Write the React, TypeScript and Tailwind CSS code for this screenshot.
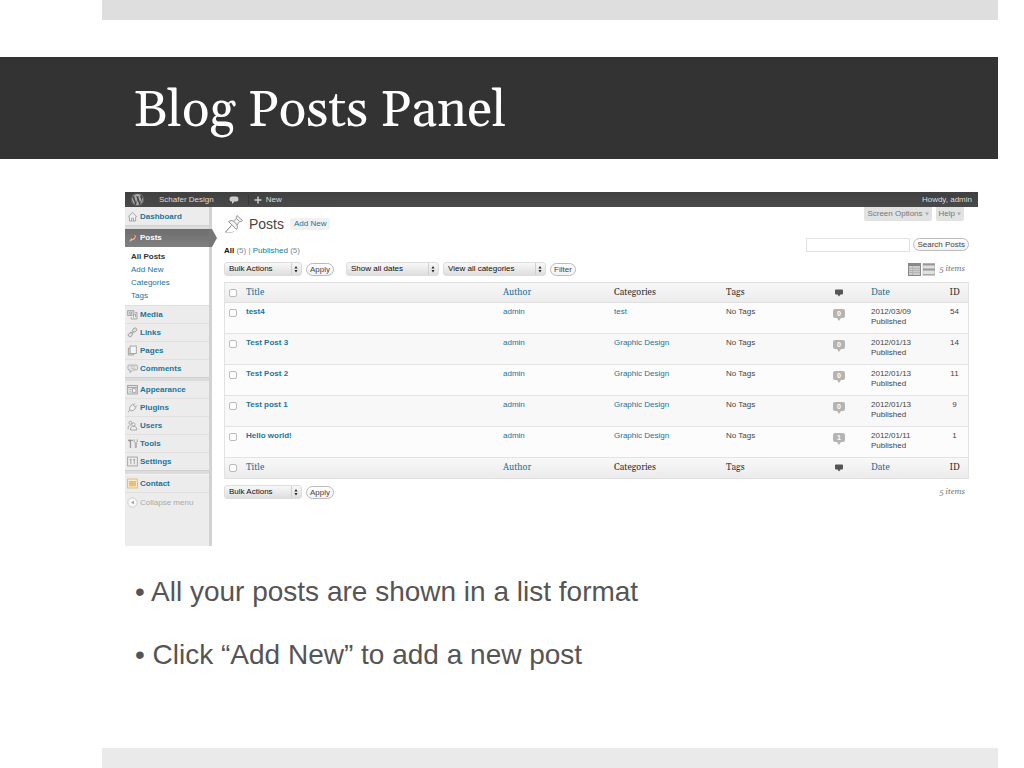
import React from "react";
import { FaWordpress } from "react-icons/fa";

const LINK = "text-[#21759b]";

type IconName =
  | "home" | "media" | "links" | "pages" | "comments" | "appearance"
  | "plugins" | "users" | "tools" | "settings" | "contact" | "collapse";

const iconShapes: Record<IconName, React.ReactNode> = {
  home: (
    <>
      <path d="M1.5 8.5 8 2l6.500 6.500" />
      <path d="M3.500 8v6.500h9V8" fill="#f4f4f4" />
      <path d="M6.500 14.500v-4h3v4" />
    </>
  ),
  media: (
    <>
      <rect x="1" y="2.500" width="9" height="7" fill="#ddd" />
      <circle cx="5.500" cy="6" r="1.700" />
      <path d="M12 5h2.500v9.500H6V12" fill="#eee" />
      <path d="M9.500 12.500V8l3-.7v4.500" />
    </>
  ),
  links: (
    <>
      <rect x="7.500" y="2" width="7" height="5" rx="2.500" transform="rotate(-40 11 4.500)" fill="#ddd" />
      <rect x="1.500" y="8.500" width="7" height="5" rx="2.500" transform="rotate(-40 5 11)" fill="#ddd" />
      <path d="m6 9.500 4-3.500" />
    </>
  ),
  pages: (
    <>
      <path d="M4 4.500H2v10h8V13" fill="#ddd" />
      <rect x="4.500" y="1.500" width="9" height="11" fill="#f6f6f6" />
    </>
  ),
  comments: (
    <>
      <path d="M3 3h10.500c1 0 1.500.7 1.500 1.500v4c0 1-.6 1.500-1.500 1.500H8l-3.500 4V10H3c-1 0-1.500-.6-1.500-1.500v-4C1.500 3.600 2 3 3 3Z" fill="#f4f4f4" />
      <path d="M4 5.500h8.500M4 7.700h8.500" strokeWidth=".8" />
    </>
  ),
  appearance: (
    <>
      <rect x="1" y="2" width="14" height="12.500" fill="#e4e4e4" />
      <path d="M1 5h14M4 8h2M4 11.500h2" />
      <rect x="8" y="7" width="5" height="5" fill="#fff" />
    </>
  ),
  plugins: (
    <path d="M1.500 14.500 4 12c-1.200-3 0-6 4-8.500l5 4.500c-2 4-5 5.500-8.500 4.500M9 4.500 11.500 2M12 7.500 14.500 5" fill="#eee" />
  ),
  users: (
    <>
      <circle cx="5" cy="4" r="2.200" fill="#eee" />
      <path d="M1.500 13.500C1.500 9 3 7.500 5 7.500" />
      <circle cx="9.500" cy="6.500" r="2.300" fill="#f6f6f6" />
      <path d="M5 14.500c0-4 1.500-5.200 4.500-5.200s4.800 1.200 4.800 5.200Z" fill="#f0f0f0" />
    </>
  ),
  tools: (
    <>
      <path d="M1.500 3.500h7M5 3.500v11M3.500 2v3" strokeWidth="2" />
      <path d="M10.500 2v3.500l1.500 1V14h1.500V6.500l1.500-1V2" />
    </>
  ),
  settings: (
    <>
      <rect x="1" y="1.500" width="14" height="13" fill="#eee" />
      <path d="M5.500 4v8M10.500 4v8M4 5.500h3M9 5.500h3" />
    </>
  ),
  contact: (
    <g stroke="#dcb062">
      <rect x="1" y="1.500" width="14" height="13" fill="#fbeed2" />
      <rect x="4" y="5" width="8" height="6.500" fill="#f3cf8c" />
      <path d="M4 8.500h8M7 5v3.500" />
    </g>
  ),
  collapse: (
    <>
      <circle cx="8" cy="8" r="6.800" fill="#f7f7f7" stroke="#c8c8c8" />
      <path d="M10 5.500v5L6 8Z" fill="#999" stroke="none" />
    </>
  ),
};

function MenuIcon({ name }: { name: IconName }) {
  return (
    <svg viewBox="0 0 16 16" className="size-[11px] shrink-0" fill="none" stroke="#999" strokeWidth="1.200" aria-hidden="true">
      {iconShapes[name]}
    </svg>
  );
}

function MenuItem({ icon, label }: { icon: IconName; label: string }) {
  return (
    <li className="border-b border-[#e0e0e0] last:border-b-0">
      <a href="#" className={`flex h-[17px] items-center gap-[2px] pl-[2px] font-bold ${LINK}`}>
        <MenuIcon name={icon} />
        {label}
      </a>
    </li>
  );
}

const Separator = () => <div className="h-1 border-t border-[#d0d0d0] bg-[#dcdcdc]" />;

const submenu = ["Add New", "Categories", "Tags"];
const contentMenu: [IconName, string][] = [["media", "Media"], ["links", "Links"], ["pages", "Pages"], ["comments", "Comments"]];
const siteMenu: [IconName, string][] = [
  ["appearance", "Appearance"], ["plugins", "Plugins"], ["users", "Users"], ["tools", "Tools"], ["settings", "Settings"],
];

function Sidebar() {
  return (
    <nav className="w-[87px] shrink-0 border-r-[3px] border-[#d2d2d2] bg-[#ececec] pb-[34px]">
      <ul className="pt-px"><MenuItem icon="home" label="Dashboard" /></ul>
      <Separator />
      <div className="relative">
        <a href="#" className="flex h-[18px] items-center gap-[2px] bg-linear-to-b from-[#6d6d6d] to-[#808080] pl-[2px] font-bold text-white">
          <svg viewBox="0 0 16 16" className="size-[11px]" aria-hidden="true">
            <path d="m3 13 3-5 3-4 3-1 1 2-2 4-4 2Z" fill="#d8c8c0" />
            <path d="m6 7 4-4 2 2-4 4Z" fill="#b5533c" />
          </svg>
          Posts
        </a>
        <svg viewBox="0 0 8 18" className="absolute top-0 -right-2 h-[18px] w-2" aria-hidden="true">
          <path d="M0 0h3l5 9-5 9H0Z" fill="#777" />
        </svg>
      </div>
      <ul className="bg-white pt-[3px] pb-[3px] leading-[13px]">
        <li className="pl-1.5"><a href="#" className="font-bold text-[#333]">All Posts</a></li>
        {submenu.map((s) => (
          <li key={s} className="pl-1.5"><a href="#" className={LINK}>{s}</a></li>
        ))}
      </ul>
      <ul className="border-t border-[#dfdfdf]">
        {contentMenu.map(([i, l]) => <MenuItem key={l} icon={i} label={l} />)}
      </ul>
      <Separator />
      <ul>
        {siteMenu.map(([i, l]) => <MenuItem key={l} icon={i} label={l} />)}
      </ul>
      <Separator />
      <ul className="border-t border-[#f4f4f4]"><MenuItem icon="contact" label="Contact" /></ul>
      <button type="button" className="flex h-5 w-full items-center gap-[2px] border-t border-[#e0e0e0] pl-[2px] text-[#aaa]">
        <MenuIcon name="collapse" />
        Collapse menu
      </button>
    </nav>
  );
}

function Dropdown({ label, name, className }: { label: string; name: string; className: string }) {
  return (
    <div className={`relative h-3.5 ${className}`}>
      <select
        aria-label={name}
        className="size-full appearance-none rounded-[3px] border border-[#ddd] bg-linear-to-b from-[#f8f8f8] to-[#dedede] pl-1 text-[8px] leading-3 text-[#111]"
      >
        <option>{label}</option>
      </select>
      <svg viewBox="0 0 10 12" className="pointer-events-none absolute top-px right-px h-3 w-2.5" aria-hidden="true">
        <path d="M.5 0v12" stroke="#d0d0d0" />
        <path d="M3.500 5.500 5 3l1.500 2.500ZM3.500 7 5 9.500 6.500 7Z" fill="#222" />
      </svg>
    </div>
  );
}

function PillButton({ children }: { children: React.ReactNode }) {
  return (
    <button type="button" className="h-[13px] rounded-full border border-[#bbb] bg-linear-to-b from-white to-[#f2f2f2] px-[3px] text-[8px] leading-[11px] text-[#444]">
      {children}
    </button>
  );
}

function BulkActions({ name }: { name: string }) {
  return (
    <div className="flex items-center gap-1">
      <Dropdown label="Bulk Actions" name={name} className="w-[78px]" />
      <PillButton>Apply</PillButton>
    </div>
  );
}

const ItemCount = () => (
  <span className="pr-1 font-[Georgia,Gelasio,'Liberation_Serif',serif] text-[8px] text-[#777] italic">5 items</span>
);

function HeadRow({ edge }: { edge: string }) {
  const cell = `h-[21px] text-left font-normal ${edge}`;
  return (
    <tr className="bg-linear-to-b from-[#f8f8f8] to-[#ebebeb] font-[Georgia,Gelasio,'Liberation_Serif',serif] text-[9px] text-[#333]">
      <th className={cell}><Tick label="Select all posts" /></th>
      <th className={cell}><a href="#" className={LINK}>Title</a></th>
      <th className={cell}><a href="#" className={LINK}>Author</a></th>
      <th className={cell}>Categories</th>
      <th className={cell}>Tags</th>
      <th className={cell} aria-label="Comments">
        <svg viewBox="0 0 8 8" className="mx-auto size-2" aria-hidden="true">
          <path d="M1 .5h6q1 0 1 1v3q0 1-1 1H5.500L4 7.500 2.500 5.500H1q-1 0-1-1v-3q0-1 1-1Z" fill="#555" />
        </svg>
      </th>
      <th className={cell}><a href="#" className={LINK}>Date</a></th>
      <th className={`h-[21px] text-center font-normal ${edge}`}>ID</th>
    </tr>
  );
}

function Tick({ label }: { label: string }) {
  return (
    <input
      type="checkbox"
      aria-label={label}
      className="ml-1 block size-[8px] appearance-none rounded-[2px] border border-[#bbb] bg-white"
    />
  );
}

const posts = [
  { title: "test4", category: "test", comments: 0, date: "2012/03/09", id: 54 },
  { title: "Test Post 3", category: "Graphic Design", comments: 0, date: "2012/01/13", id: 14 },
  { title: "Test Post 2", category: "Graphic Design", comments: 0, date: "2012/01/13", id: 11 },
  { title: "Test post 1", category: "Graphic Design", comments: 0, date: "2012/01/13", id: 9 },
  { title: "Hello world!", category: "Graphic Design", comments: 1, date: "2012/01/11", id: 1 },
];

function PostsTable() {
  return (
    <table className="mt-1.5 w-full table-fixed border-separate border-spacing-0 border-x border-[#e3e3e3] leading-[10px]">
      <colgroup>
        <col className="w-[21px]" />
        <col />
        <col className="w-[111px]" />
        <col className="w-[112px]" />
        <col className="w-[81px]" />
        <col className="w-[64px]" />
        <col className="w-[70px]" />
        <col className="w-[27px]" />
      </colgroup>
      <thead><HeadRow edge="border-y border-[#dfdfdf]" /></thead>
      <tbody>
        {posts.map((p) => (
          <tr key={p.title} className="h-[31px] align-top odd:bg-[#fcfcfc] even:bg-[#f8f8f8] [&>td]:border-b [&>td]:border-[#e3e3e3] [&>td]:pt-1">
            <td><div className="pt-[2px]"><Tick label={`Select ${p.title}`} /></div></td>
            <td><a href="#" className={`font-bold ${LINK}`}>{p.title}</a></td>
            <td><a href="#" className={LINK}>admin</a></td>
            <td><a href="#" className={LINK}>{p.category}</a></td>
            <td>No Tags</td>
            <td>
              <a href="#" className="relative mx-auto mt-[2px] block h-3 w-3">
                <svg viewBox="0 0 12 12" className="size-3" aria-hidden="true">
                  <path d="M2 0h8q2 0 2 2v5q0 2-2 2H8l-2 3-2-3H2Q0 9 0 7V2Q0 0 2 0Z" fill="#b4b4b4" />
                </svg>
                <span className="absolute inset-x-0 top-0 text-center text-[7px] leading-[9px] font-bold text-white">{p.comments}</span>
              </a>
            </td>
            <td>{p.date}<br />Published</td>
            <td className="text-center">{p.id}</td>
          </tr>
        ))}
      </tbody>
      <tfoot><HeadRow edge="border-b border-[#dfdfdf]" /></tfoot>
    </table>
  );
}

function ScreenTab({ children }: { children: React.ReactNode }) {
  return (
    <button type="button" className="flex h-3.5 items-center gap-[2px] rounded-b-[2px] bg-[#e2e2e2] px-[3px] text-[8px] text-[#777]">
      {children}
      <svg viewBox="0 0 5 4" className="h-1 w-1" aria-hidden="true"><path d="M0 0h5L2.500 4Z" fill="#aaa" /></svg>
    </button>
  );
}

function AdminPanel() {
  return (
    <section className="mt-[33px] mr-[46px] ml-[125px] font-['Liberation_Sans',Arial,sans-serif] text-[8px] leading-[10px] text-[#444]">
      <header className="flex h-[15px] items-center bg-linear-to-b from-[#404040] to-[#494949] pr-1.5 pl-1.5 text-[#ddd]">
        <FaWordpress className="size-[13px] text-[#aaa]" aria-hidden="true" />
        <a href="#" className="ml-[15px]">Schafer Design</a>
        <a href="#" aria-label="Comments" className="ml-[15px] border-r border-[#383838] pr-[9px]">
          <svg viewBox="0 0 10 10" className="size-[10px]" aria-hidden="true">
            <path d="M2.500 1.500h5Q9.500 1.500 9.500 4T7.500 6.500H5.500L3 9V6.500H2.500Q.5 6.500.5 4t2-2.500Z" fill="#ccc" />
          </svg>
        </a>
        <a href="#" className="ml-[5px] flex items-center gap-1">
          <svg viewBox="0 0 8 8" className="size-2" aria-hidden="true"><path d="M4 .5v7M.5 4h7" stroke="#ccc" strokeWidth="1.500" /></svg>
          New
        </a>
        <a href="#" className="ml-auto">Howdy, admin</a>
      </header>
      <div className="flex">
        <Sidebar />
        <div className="min-w-0 flex-1 pr-[9px] pl-3">
          <div className="flex items-start">
            <div className="flex h-[26px] items-center pt-2">
              <svg viewBox="0 0 20 20" className="size-5" fill="#f2f2f2" stroke="#999" strokeWidth="1" aria-hidden="true">
                <path d="M1 18.500h7l2-1.500" stroke="#ccc" fill="none" />
                <path d="m7.500 11.500-6 6.500" stroke="#777" />
                <path d="M4.500 7.500q2.500-1.700 5-.5l3-2.500q-.8-1.800.5-3L18.500 6.500q-1.200 1.500-3 1l-2.500 3.500q1.200 2.500-.5 4.500Z" />
                <path d="m9.500 7 3.700 4M12.500 4.500l3 3" fill="none" />
              </svg>
              <h2 className="ml-[5px] text-[14px] leading-[18px] text-[#464646]">Posts</h2>
              <a href="#" className={`ml-[6px] rounded-[3px] bg-[#f1f1f1] px-1 py-px ${LINK}`}>Add New</a>
            </div>
            <div className="ml-auto flex gap-1 pr-[5px]">
              <ScreenTab>Screen Options</ScreenTab>
              <ScreenTab>Help</ScreenTab>
            </div>
          </div>
          <div className="flex h-[23px] items-end justify-between">
            <p className="text-[#888]">
              <a href="#" className="font-bold text-[#111]">All</a> (5) | <a href="#" className={LINK}>Published</a> (5)
            </p>
            <form className="flex h-full items-center gap-[3px]" onSubmit={(e) => e.preventDefault()}>
              <input type="text" aria-label="Search posts" className="h-3.5 w-[104px] border border-[#e2e2e2] bg-white px-1 text-[8px]" />
              <PillButton>Search Posts</PillButton>
            </form>
          </div>
          <div className="mt-1.5 flex h-3.5 items-center">
            <BulkActions name="Bulk actions, top" />
            <div className="ml-3 flex items-center gap-1">
              <Dropdown label="Show all dates" name="Dates" className="w-[93px]" />
              <Dropdown label="View all categories" name="Categories" className="w-[103px]" />
              <PillButton>Filter</PillButton>
            </div>
            <div className="ml-auto flex items-center">
              <button type="button" aria-label="List view">
                <svg viewBox="0 0 13 13" className="size-[13px]" aria-hidden="true">
                  <rect x=".5" y=".5" width="12" height="12" fill="#ccc" stroke="#888" />
                  <path d="M1 2h11" stroke="#888" strokeWidth="2" />
                  <path d="M1 5.500h11M1 7.500h11M1 9.500h11M4.500 3v9" stroke="#b4b4b4" />
                </svg>
              </button>
              <button type="button" aria-label="Excerpt view" className="ml-px">
                <svg viewBox="0 0 13 13" className="size-[13px]" aria-hidden="true">
                  <rect x="1" y=".5" width="11.500" height="12" fill="#e0e0e0" stroke="#ccc" />
                  <path d="M1 1.500h12M1 6.500h12" stroke="#999" strokeWidth="2" />
                  <path d="M1 11.500h12" stroke="#aaa" strokeWidth="1" />
                </svg>
              </button>
              <span className="ml-1"><ItemCount /></span>
            </div>
          </div>
          <PostsTable />
          <div className="mt-1.5 flex h-3.5 items-center justify-between">
            <BulkActions name="Bulk actions, bottom" />
            <ItemCount />
          </div>
        </div>
      </div>
    </section>
  );
}

const bullets = ["All your posts are shown in a list format", "Click “Add New” to add a new post"];

export default function App() {
  return (
    <main className="flex min-h-screen flex-col bg-white">
      <div className="mr-[26px] ml-[102px] h-5 bg-[#dedede]" />
      <header className="mt-[37px] mr-[26px] bg-[#333] pt-6 pb-[18px] pl-[134px]">
        <h1 className="font-[Georgia,Gelasio,'Liberation_Serif',serif] text-[51px] leading-[60px] text-white">Blog Posts Panel</h1>
      </header>
      <AdminPanel />
      <ul className="mt-7 flex flex-col gap-[27px] pl-[135px] font-['Liberation_Sans',Arial,sans-serif] text-[28px] leading-9 text-[#555]">
        {bullets.map((b) => <li key={b}>• {b}</li>)}
      </ul>
      <div className="mt-auto mr-[26px] ml-[102px] h-5 bg-[#eaeaea]" />
    </main>
  );
}
